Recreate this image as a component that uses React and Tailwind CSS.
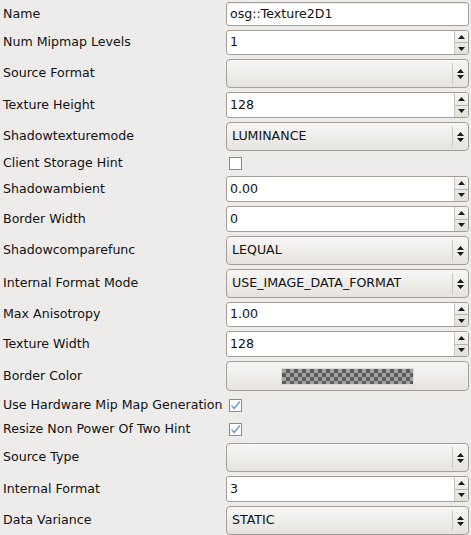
import React from 'react'

const font = { fontFamily: '"DejaVu Sans", "Liberation Sans", sans-serif' }

function TextField({ value }) {
  return (
    <div className="h-[24px] w-[243px] flex items-center rounded-[3px] border border-[#a39e98] bg-white pl-[3px] text-[#111] shadow-[inset_0_1px_1px_rgba(0,0,0,0.08)]">
      {value}
    </div>
  )
}

function SpinBox({ value, h = 'h-[26px]' }) {
  return (
    <div className={`${h} w-[243px] flex rounded-[3px] border border-[#a39e98] bg-white text-[#111] overflow-hidden`}>
      <div className="flex-1 flex items-center pl-[3px]">{value}</div>
      <div className="w-[14px] flex flex-col border-l border-[#c9c5bf] bg-gradient-to-b from-[#f6f5f4] to-[#e2dfdb]">
        <div className="flex-1 flex items-center justify-center border-b border-[#b9b4ae]">
          <svg width="7" height="4" viewBox="0 0 7 4"><path d="M3.5 0 L7 4 L0 4 Z" fill="#1a1a1a" /></svg>
        </div>
        <div className="flex-1 flex items-center justify-center">
          <svg width="7" height="4" viewBox="0 0 7 4"><path d="M0 0 L7 0 L3.5 4 Z" fill="#1a1a1a" /></svg>
        </div>
      </div>
    </div>
  )
}

function Combo({ value }) {
  return (
    <div className="h-[29px] w-[243px] flex items-center rounded-[4px] border border-[#a39e98] bg-gradient-to-b from-[#f8f7f6] to-[#e6e3df] text-[#111]">
      <div className="flex-1 pl-[5px]">{value}</div>
      <div className="h-[21px] w-px bg-[#c9c5bf]" />
      <div className="w-[15px] flex flex-col items-center justify-center gap-[2px]">
        <svg width="7" height="4" viewBox="0 0 7 4"><path d="M3.5 0 L7 4 L0 4 Z" fill="#1a1a1a" /></svg>
        <svg width="7" height="4" viewBox="0 0 7 4"><path d="M0 0 L7 0 L3.5 4 Z" fill="#1a1a1a" /></svg>
      </div>
    </div>
  )
}

function CheckBox({ checked }) {
  return (
    <div className="w-[243px] flex items-center pl-[3px]">
      <div className="w-[13px] h-[13px] border border-[#8f8a84] bg-white flex items-center justify-center">
        {checked && (
          <svg width="11" height="11" viewBox="0 0 11 11">
            <path d="M1.5 5.5 L4.2 8.5 L9.8 1.5" fill="none" stroke="#6f9fd4" strokeWidth="1.6" />
          </svg>
        )}
      </div>
    </div>
  )
}

function ColorButton() {
  return (
    <div className="h-[30px] w-[243px] flex items-center justify-center rounded-[4px] border border-[#a39e98] bg-gradient-to-b from-[#f8f7f6] to-[#e6e3df]">
      <div className="w-[133px] h-[17px] border border-[#dcdad6] bg-[repeating-conic-gradient(#5c5c5c_0_25%,#a3a3a3_0_50%)] bg-[length:8px_8px]" />
    </div>
  )
}

const rows = [
  { label: 'Name', el: <TextField value="osg::Texture2D1" /> },
  { label: 'Num Mipmap Levels', el: <SpinBox value="1" h="h-[25px]" /> },
  { label: 'Source Format', el: <Combo value="" /> },
  { label: 'Texture Height', el: <SpinBox value="128" /> },
  { label: 'Shadowtexturemode', el: <Combo value="LUMINANCE" /> },
  { label: 'Client Storage Hint', el: <CheckBox checked={false} />, h: 'h-[17px]' },
  { label: 'Shadowambient', el: <SpinBox value="0.00" /> },
  { label: 'Border Width', el: <SpinBox value="0" /> },
  { label: 'Shadowcomparefunc', el: <Combo value="LEQUAL" /> },
  { label: 'Internal Format Mode', el: <Combo value="USE_IMAGE_DATA_FORMAT" /> },
  { label: 'Max Anisotropy', el: <SpinBox value="1.00" h="h-[25px]" /> },
  { label: 'Texture Width', el: <SpinBox value="128" /> },
  { label: 'Border Color', el: <ColorButton /> },
  { label: 'Use Hardware Mip Map Generation', el: <CheckBox checked />, h: 'h-[20px]' },
  { label: 'Resize Non Power Of Two Hint', el: <CheckBox checked />, h: 'h-[20px]' },
  { label: 'Source Type', el: <Combo value="" /> },
  { label: 'Internal Format', el: <SpinBox value="3" /> },
  { label: 'Data Variance', el: <Combo value="STATIC" /> },
]

export default function App() {
  return (
    <div className="w-[471px] h-[535px] overflow-hidden bg-[#edeceb] text-[12.6px] text-[#111]" style={font}>
      <div className="flex flex-col gap-[4px] pt-[2px]">
        {rows.map((r) => (
          <div key={r.label} className={`flex items-center ${r.h || ''}`}>
            <div className="w-[226px] pl-[3px] whitespace-nowrap">{r.label}</div>
            {r.el}
          </div>
        ))}
      </div>
    </div>
  )
}
